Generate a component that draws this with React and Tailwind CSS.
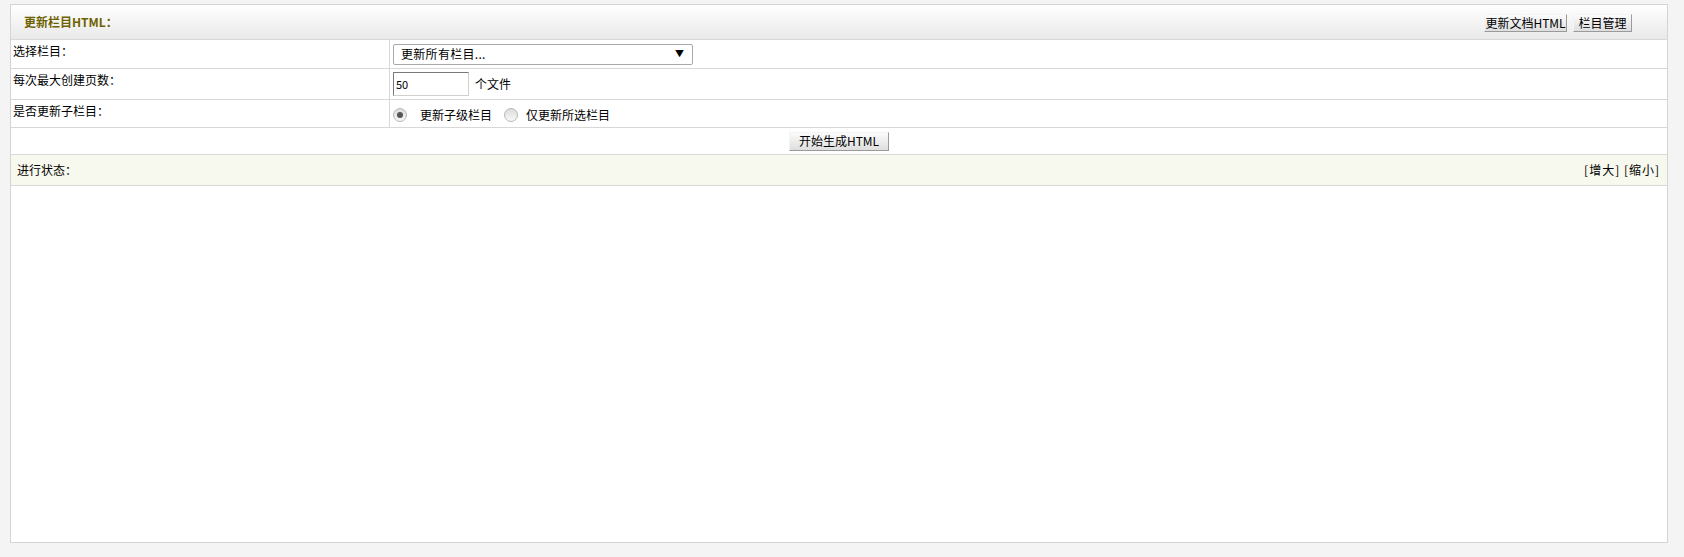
import React, { useState } from "react";

const font = { fontFamily: '"Noto Sans CJK SC", "Liberation Sans", sans-serif' };

// Old-style raised button
const OldButton = ({ children, className = "" }) => (
  <button
    className={`h-[18px] px-0 whitespace-nowrap text-[12px] leading-[16px] text-black bg-gradient-to-b from-[#fbfbfb] to-[#dedede] border border-t-[#f4f4f4] border-l-[#f4f4f4] border-r-[#9a9a9a] border-b-[#9a9a9a] ${className}`}
  >
    {children}
  </button>
);

const Radio = ({ checked, onClick }) => (
  <span
    onClick={onClick}
    className="w-[14px] h-[14px] rounded-full border border-[#b8b8b8] bg-gradient-to-b from-[#dcdcdc] to-[#f8f8f8] flex items-center justify-center cursor-pointer"
  >
    {checked && <span className="w-[6px] h-[6px] rounded-full bg-[#555]" />}
  </span>
);

const FormRow = ({ label, height, children }) => (
  <div className={`flex border-b border-[#d8d8d8] ${height}`}>
    <div className="w-[379px] shrink-0 border-r border-[#d8d8d8] pl-[2px] pt-[3px] text-[12px] leading-[16px]">
      {label}
    </div>
    <div className="flex-1 flex items-center pl-[3px]">{children}</div>
  </div>
);

export default function App() {
  const [upnext, setUpnext] = useState(1);

  return (
    <div className="min-h-[557px] bg-[#f4f4f4] pt-[4px] pl-[10px] pr-[16px] pb-[14px] text-black" style={font}>
      <div className="h-[539px] bg-white border border-[#d4d4d4] flex flex-col">
        {/* Header */}
        <div className="h-[35px] shrink-0 flex items-center justify-between border-b border-[#d8d8d8] bg-gradient-to-b from-[#ffffff] to-[#e9e9e9] pl-[13px] pr-[35px]">
          <span className="text-[12px] font-bold text-[#6e6200]">更新栏目HTML：</span>
          <div className="flex items-center gap-[6px] pt-[1px]">
            <OldButton className="w-[83px]">更新文档HTML</OldButton>
            <OldButton className="w-[59px]">栏目管理</OldButton>
          </div>
        </div>

        <FormRow label="选择栏目：" height="h-[29px]">
          <div className="w-[300px] h-[21px] border border-[#a9a9a9] rounded-[2px] flex items-center justify-between pl-[7px] pr-[8px] text-[12px]">
            <span className="tracking-[0.3px]">更新所有栏目...</span>
            <span className="text-[9px]">▼</span>
          </div>
        </FormRow>

        <FormRow label="每次最大创建页数：" height="h-[31px]">
          <input
            defaultValue="50"
            className="w-[76px] h-[24px] pl-[2px] text-[11px] border border-t-[#7a7a7a] border-l-[#7a7a7a] border-r-[#d0d0d0] border-b-[#d0d0d0] outline-none"
          />
          <span className="ml-[6px] text-[12px]">个文件</span>
        </FormRow>

        <FormRow label="是否更新子栏目：" height="h-[28px]">
          <div className="flex items-center text-[12px] pt-[2px]">
            <Radio checked={upnext === 1} onClick={() => setUpnext(1)} />
            <span className="ml-[13px]">更新子级栏目</span>
            <span className="ml-[12px]">
              <Radio checked={upnext === 0} onClick={() => setUpnext(0)} />
            </span>
            <span className="ml-[8px]">仅更新所选栏目</span>
          </div>
        </FormRow>

        <div className="h-[27px] shrink-0 flex items-center justify-center border-b border-[#d8d8d8]">
          <OldButton className="w-[100px] h-[19px]">开始生成HTML</OldButton>
        </div>

        {/* Status */}
        <div className="h-[31px] shrink-0 flex items-center justify-between bg-[#f8f9ee] border-b border-[#d8d8d8] pl-[6px] pr-[7px] text-[12px]">
          <span>进行状态：</span>
          <span className="tracking-[1px]">[增大] [缩小]</span>
        </div>

        <div className="flex-1" />
      </div>
    </div>
  );
}
